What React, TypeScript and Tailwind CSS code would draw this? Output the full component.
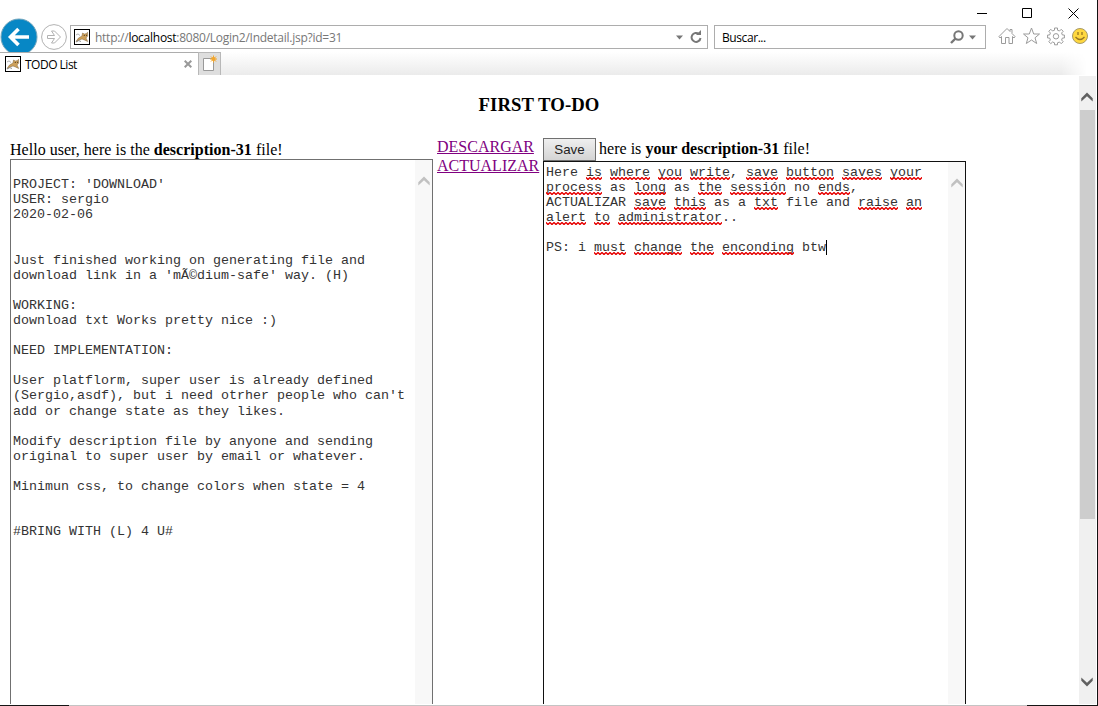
import React from "react";

const leftText = `
PROJECT: 'DOWNLOAD'
USER: sergio
2020-02-06


Just finished working on generating file and
download link in a 'mÃ©dium-safe' way. (H)

WORKING:
download txt Works pretty nice :)

NEED IMPLEMENTATION:

User platflorm, super user is already defined
(Sergio,asdf), but i need otrher people who can't
add or change state as they likes.

Modify description file by anyone and sending
original to super user by email or whatever.

Minimun css, to change colors when state = 4


#BRING WITH (L) 4 U#`;

// Words wrapped in underscores carry the spell-check underline.
const rightLines = [
  "Here _is_ _where_ _you_ _write_, _save_ _button_ _saves_ _your_",
  "_process_ as _long_ as _the_ _sessión_ no _ends_,",
  "ACTUALIZAR _save_ _this_ as a _txt_ file and _raise_ _an_",
  "_alert_ _to_ _administrator_..",
  "",
  "PS: i _must_ _change_ _the_ _enconding_ btw",
];

function Misspelled({ word }: { word: string }) {
  return (
    <span className="relative">
      {word}
      <svg className="absolute left-0 top-[12px] h-[3px] w-full overflow-hidden" aria-hidden="true">
        <defs>
          <pattern id="squiggle" width="4" height="3" patternUnits="userSpaceOnUse">
            <path d="M-1 1.500 L0 .5 L2 2.500 L4 .5 L5 1.500" fill="none" stroke="#e60000" strokeWidth="1.400" />
          </pattern>
        </defs>
        <rect width="100%" height="3" fill="url(#squiggle)" />
      </svg>
    </span>
  );
}

function Cat() {
  return (
    <svg width="16" height="16" viewBox="0 0 16 16" className="shrink-0">
      <rect x=".5" y=".5" width="15" height="15" fill="#fff" stroke="#000" />
      <path d="M2 6Q4 3.500 6 6.500" fill="none" stroke="#999" strokeWidth=".8" />
      <path d="M2 12.500L4.500 9L8 7L8.500 4L10.300 5L12 4.800L13.500 3.300L13.700 7L12 9L13.700 12.500L10.500 11L8 10L5 11Z" fill="#cda05a" stroke="#80653c" strokeWidth=".5" />
      <path d="M2 13Q5 10.500 7 12.500" fill="none" stroke="#777" strokeWidth=".8" />
      <path d="M9.800 6.500h1M12 6.300h1" stroke="#302414" strokeWidth=".8" />
    </svg>
  );
}

function Chevron({ className }: { className: string }) {
  return (
    <svg width="12" height="10" viewBox="0 0 12 10" className={className} fill="currentColor">
      <path d="M6 .5L11.700 6.200V9.500L6 4.300L.3 9.500V6.200Z" />
    </svg>
  );
}

function Chrome() {
  return (
    <header className="h-[75px] shrink-0 font-['Open_Sans',sans-serif] text-[12px]">
      <div className="flex h-[25px] justify-end pr-[18px] pt-[8px]">
        <svg width="102" height="11" viewBox="0 0 102 11" fill="none" stroke="#000" className="shrink-0">
          <path d="M0 5.500h10M45.500 .5h9v9h-9zM91.500 .5l10 10M101.500 .5l-10 10" />
        </svg>
      </div>
      <div className="flex h-[27px] items-start">
        <div className="h-[27px] w-[41px] shrink-0">
          <svg width="41" height="34" viewBox="0 0 41 34" className="relative -top-[7px]">
            <circle cx="19" cy="19" r="18" fill="#0787c5" stroke="#76a7bd" />
            <path d="M29 19H11M18.500 11L10.500 19L18.500 27" fill="none" stroke="#fff" strokeWidth="3.600" />
          </svg>
        </div>
        <svg width="26" height="26" viewBox="0 0 26 26" fill="none" stroke="#b2b2b2" className="mr-[3px] -mt-px shrink-0">
          <circle cx="13" cy="13" r="12.400" />
          <path d="M6.500 11.500h7l-3-4.500h3l6 6l-6 6h-3l3-4.500h-7z" />
        </svg>
        <div className="flex h-6 w-[638px] shrink-0 items-center border border-[#adadad] bg-white pl-[3px]">
          <Cat />
          <span className="ml-[5px] whitespace-nowrap pt-[2px] tracking-[-0.26px] text-[#777]">http://<span className="text-black">localhost</span>:8080/Login2/Indetail.jsp?id=31</span>
          <svg width="28" height="14" viewBox="0 0 28 14" className="ml-auto mr-[3px] shrink-0">
            <path d="M0 5.500h7l-3.500 4z" fill="#777" />
            <path d="M23 4A4.500 4.500 0 1 0 24.500 8" fill="none" stroke="#777" strokeWidth="2" />
            <path d="M20 5h5V0z" fill="#777" />
          </svg>
        </div>
        <div className="ml-[6px] flex h-6 w-[272px] shrink-0 items-center border border-[#adadad] bg-white pl-[7px]">
          <span className="pt-[2px] tracking-[-0.42px]">Buscar...</span>
          <svg width="27" height="14" viewBox="0 0 27 14" className="ml-auto mr-[8px]">
            <circle cx="8.500" cy="5.500" r="4.200" fill="none" stroke="#777" strokeWidth="2" />
            <path d="M5.500 8.500L1 13" stroke="#777" strokeWidth="2.400" />
            <path d="M19 5.500h7l-3.500 4z" fill="#777" />
          </svg>
        </div>
        <svg width="92" height="20" viewBox="0 0 92 20" className="ml-[12px] mt-[1px] shrink-0" fill="none" stroke="#9b9b9b">
          <path d="M1 10.500L9 2.500L12 5.500V3.500H14V7.500L17 10.500L16 12L14.500 10.500V17.500H11V11.500H7.500V17.500H3.500V10.500L2 12Z" />
          <path d="M33.500 2L35.700 8H41.500L37 11.800L38.700 17.500L33.500 14L28.300 17.500L30 11.800L25.500 8H31.300Z" />
          <path d="M56.500 2h3v2.200l2 .8l1.700-1.700l2 2l-1.600 1.700l.8 2h2v3h-2l-.8 2l1.600 1.700l-2 2l-1.700-1.700l-2 .8v2h-3v-2l-2-.8l-1.700 1.700l-2-2l1.600-1.700l-.8-2h-2v-3h2l.8-2l-1.600-1.700l2-2l1.700 1.700l2-.8z" />
          <circle cx="58" cy="10.300" r="2.700" />
          <circle cx="82" cy="10" r="7.500" fill="#ffd83f" stroke="#a79a68" />
          <path d="M80 6v3M84 6v3M77.500 11Q82 16 86.500 11" stroke="#967522" strokeWidth="1.300" />
        </svg>
      </div>
      <div className="flex h-[23px]">
        <div className="flex w-[198px] shrink-0 items-center border-t border-[#adadad] bg-white pl-[5px]">
          <Cat />
          <span className="ml-[4px] pt-[2px] tracking-[-0.5px]">TODO List</span>
          <svg width="8" height="8" viewBox="0 0 8 8" className="ml-auto mr-[6px]" stroke="#999" strokeWidth="2">
            <path d="M.7 .7L7.300 7.300M7.300 .7L.7 7.300" />
          </svg>
        </div>
        <div className="w-[23px] shrink-0 border border-b-0 border-[#b8b8b8] bg-[#dedede]">
          <svg width="21" height="22" viewBox="0 0 21 22">
            <path d="M4.500 5.500h10v12h-10z" fill="#fff" stroke="#999" />
            <circle cx="14.500" cy="6" r="2" fill="#f2a62d" />
            <path d="M14.500 2.500v7M11 6h7M12 3.500l5 5M17 3.500l-5 5" stroke="#f2a62d" strokeWidth="1" />
          </svg>
        </div>
        <div className="mr-[10px] grow bg-linear-to-b from-white to-[#ebebeb] [mask-image:linear-gradient(to_right,black_97%,transparent)]" />
      </div>
    </header>
  );
}

export default function App() {
  return (
    <div className="flex h-[706px] w-[1098px] flex-col overflow-hidden bg-white text-black">
      <div className="flex h-[705px] shrink-0 flex-col border-r border-[#111]">
        <Chrome />
        <div className="flex min-h-0 grow">
          <main className="h-[629px] w-[1079px] shrink-0 overflow-hidden pl-[10px] font-['Liberation_Serif',serif] text-[16px] leading-[19px]">
            <h1 className="mt-[19px] h-[22px] pr-[11px] text-center text-[18.720px] font-bold leading-[22px] tracking-[0.08px]">FIRST TO-DO</h1>
            <div className="flex items-start">
              <section className="w-[423px] shrink-0 pt-[25px]">
                <p className="h-[18px] leading-[18px] tracking-[0.02px]">Hello user, here is the <b>description-31</b> file!</p>
                <div className="flex h-[545px] justify-between border border-b-0 border-[#707070]">
                  <pre className="pl-[2px] pt-[2px] font-['Liberation_Mono',monospace] text-[13.333px] leading-[15.090px] text-[#333]">{leftText}</pre>
                  <div className="flex w-[17px] shrink-0 justify-center bg-[#f8f8f8] pt-[16px]"><Chevron className="text-[#c1c1c1]" /></div>
                </div>
              </section>
              <nav className="ml-[4px] flex w-[106px] shrink-0 flex-col items-start pt-[21px] text-[#800080]">
                <a href="#descargar" className="underline">DESCARGAR</a>
                <a href="#actualizar" className="underline">ACTUALIZAR</a>
              </nav>
              <section className="w-[423px] shrink-0 pt-[22px]">
                <div className="flex h-[23px]">
                  <button className="h-[23px] w-[53px] border border-[#707070] bg-linear-to-b from-[#efefef] to-[#d4d4d4] font-['Liberation_Sans',sans-serif] text-[13.333px] leading-[20px] text-[#222]">Save</button>
                  <p className="ml-[3px] pt-px tracking-[0.02px]">here is <b>your description-31</b> file!</p>
                </div>
                <div className="flex h-[543px] justify-between border border-b-0 border-[#111]">
                  <div className="pl-[2px] pt-[3px] font-['Liberation_Mono',monospace] text-[13.333px] leading-[15.090px] text-[#333]">
                    {rightLines.map((line, i) => (
                      <div key={i} className="flex h-[15.090px] whitespace-pre">
                        {line.split("_").map((part, j) => (j % 2 ? <Misspelled key={j} word={part} /> : <span key={j}>{part}</span>))}
                        {i === 5 && <span className="h-[15px] w-px bg-black" />}
                      </div>
                    ))}
                  </div>
                  <div className="flex w-[17px] shrink-0 justify-center bg-[#f8f8f8] pt-[16px]"><Chevron className="text-[#c1c1c1]" /></div>
                </div>
              </section>
            </div>
          </main>
          <aside className="mt-px flex h-[628px] w-[17px] shrink-0 flex-col items-center bg-[#f0f0f0] pt-[16px] text-[#606060]">
            <Chevron className="-ml-px shrink-0" />
            <div className="mt-[8px] h-[409px] w-[15px] bg-[#cdcdcd]" />
            <Chevron className="-ml-px mb-[17px] mt-auto shrink-0 rotate-180" />
          </aside>
        </div>
      </div>
      <footer className="flex h-px shrink-0 bg-[#c4c4c4]">
        <div className="w-[69px] bg-[#151515]" />
        <div className="ml-auto w-[71px] bg-[#151515]" />
      </footer>
    </div>
  );
}
